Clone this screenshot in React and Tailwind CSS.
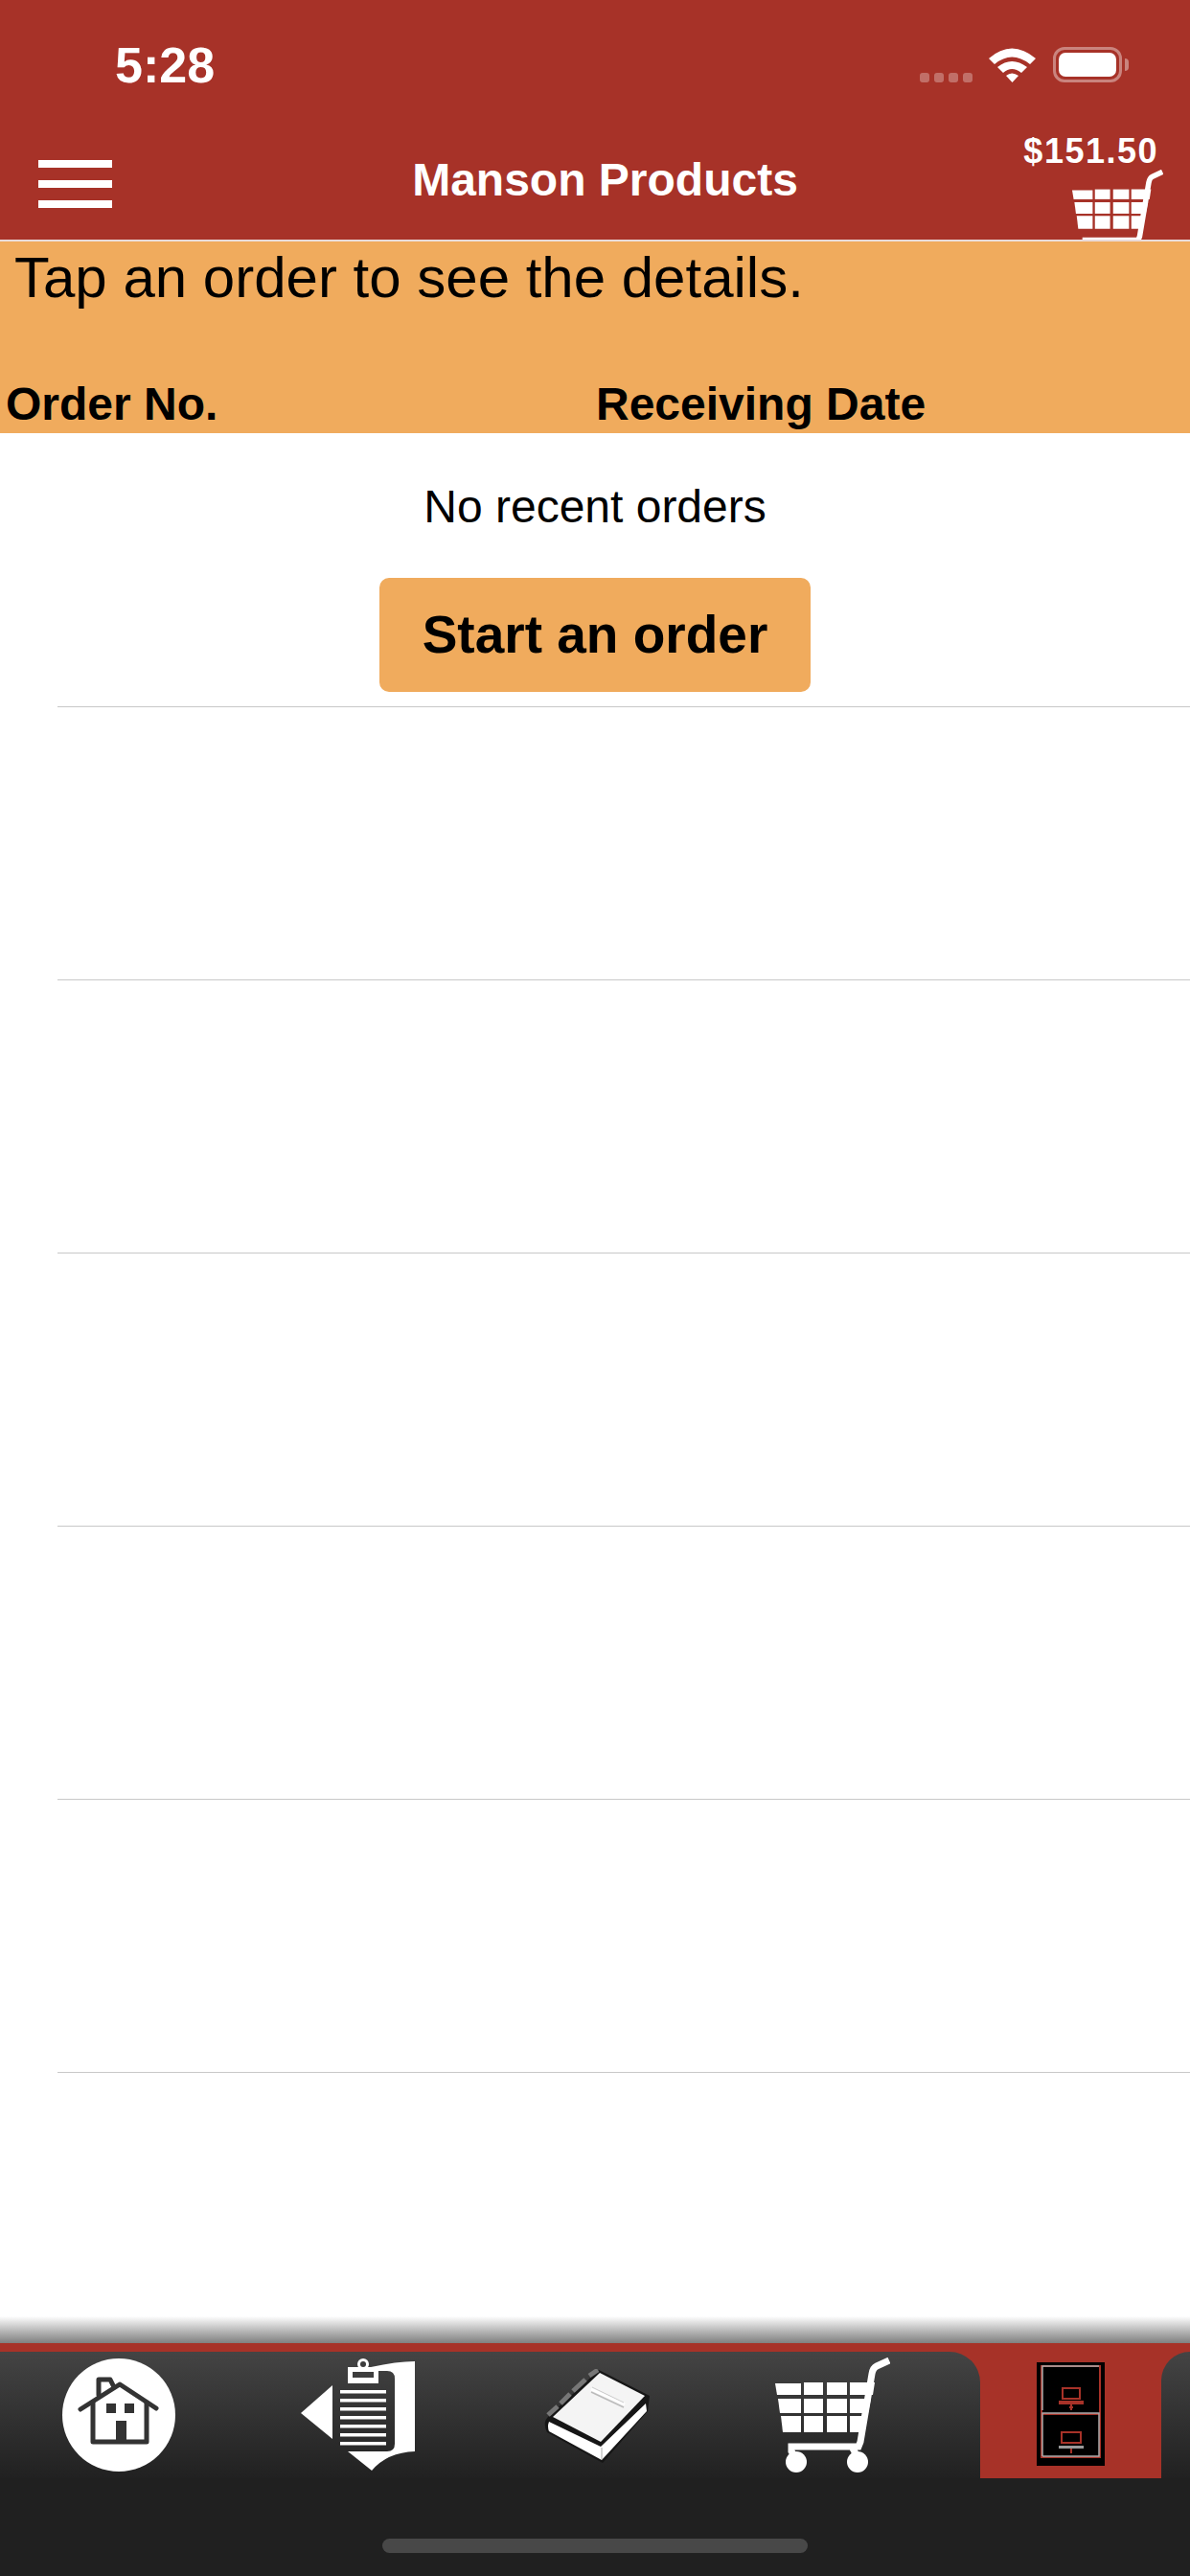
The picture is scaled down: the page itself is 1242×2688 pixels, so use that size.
const CartIcon = ({ className }) => (
    <svg viewBox="0 0 120 120" className={className}>
        <g fill="#fff">
            <path d="M0 27H27V39H2Z" />
            <path d="M30 26H50V39H30Z" />
            <path d="M54 26H75V39H54Z" />
            <path d="M78 26H104L102 39H78Z" />
            <path d="M3 43H27V58H5Z" />
            <path d="M30 43H50V58H30Z" />
            <path d="M54 43H75V58H54Z" />
            <path d="M78 43H100L97 58H78Z" />
            <path d="M6 61H27V78H8Z" />
            <path d="M30 61H50V78H30Z" />
            <path d="M54 61H75V78H54Z" />
            <path d="M78 61H96L93 78H78Z" />
            <circle cx="22" cy="109" r="11" />
            <circle cx="86" cy="109" r="11" />
        </g>
        <path
            d="M119 3L106 9Q102 11 101 17L89 88L87 93H17V98L21 104M80 93L86 104"
            fill="none"
            stroke="#fff"
            strokeWidth="7"
        />
    </svg>
);

const HomeIcon = () => (
    <svg viewBox="0 0 118 118" className="w-[118px] h-[118px] shrink-0 mt-[7px]">
        <circle cx="59" cy="59" r="59" fill="#fff" />
        <g fill="none" stroke="#333" strokeWidth="5" strokeLinecap="round" strokeLinejoin="round">
            <path d="M19 53L60 27L98 52" />
            <path d="M32 46V87H88V46" />
            <path d="M38 38V22H50L54 30" />
        </g>
        <g fill="#333">
            <rect x="46" y="47" width="10" height="10" />
            <rect x="65" y="47" width="10" height="10" />
            <rect x="56" y="65" width="11" height="20" />
        </g>
    </svg>
);

const ClipboardIcon = () => (
    <svg viewBox="0 0 120 118" className="w-[120px] h-[118px] shrink-0 mt-[7px]">
        <g fill="#fff">
            <path d="M0 57L33 28V84Z" />
            <path d="M73 9Q100 3 119 3V97Q90 98 74 117L49 97H90Q98 97 98 89V21Q98 13 90 13H81V9Z" />
            <path d="M49 9H81V26H49ZM54 14V20H76V14Z" fillRule="evenodd" />
            <circle cx="65" cy="6" r="6" />
            <rect x="41" y="33" width="48" height="3.500" />
            <rect x="41" y="42" width="48" height="3.500" />
            <rect x="41" y="51" width="48" height="3.500" />
            <rect x="41" y="60" width="48" height="3.500" />
            <rect x="41" y="69" width="48" height="3.500" />
            <rect x="41" y="78" width="48" height="3.500" />
            <rect x="41" y="87" width="48" height="3.500" />
        </g>
        <circle cx="65" cy="6" r="3" fill="#3c3c3c" />
    </svg>
);

const BookIcon = () => (
    <svg viewBox="0 0 110 98" className="w-[110px] h-[98px] shrink-0 mt-[18px]">
        <path d="M57 1L110 28L108 44L61 98L3 66Q-2 56 4 50Z" fill="#161616" />
        <path d="M5 55L59 81L106 36L107 44L60 95L5 65Q3 60 5 55Z" fill="#fff" />
        <path d="M60 82V94" stroke="#aaa" strokeWidth="1" />
        <path d="M58 4L105 28L59 76L9 50Z" fill="#f4f4f4" />
        <path d="M49 21L84 37" stroke="#fff" strokeWidth="3" />
        <path d="M49 24L83 40" stroke="#bbb" strokeWidth="1.500" />
        <path d="M50 19L83 35" stroke="#ccc" strokeWidth="1" />
        <g stroke="#777" strokeWidth="5">
            <path d="M47 7L56 1" />
            <path d="M30 23L43 11" />
            <path d="M17 36L27 26" />
            <path d="M4 48L14 39" />
        </g>
    </svg>
);

const CabinetIcon = () => (
    <svg viewBox="0 0 71 108" className="w-[71px] h-[108px] shrink-0 mt-[11px]">
        <rect width="71" height="108" fill="#000" />
        <rect x="5" y="4" width="61" height="50" fill="none" stroke="#a73228" strokeWidth="2" />
        <rect x="5" y="54" width="61" height="45" fill="none" stroke="#a73228" strokeWidth="2" />
        <path d="M6 50V4H65" fill="none" stroke="#aaa" strokeWidth="1.500" />
        <path d="M6 98V53H65V98H6" fill="none" stroke="#aaa" strokeWidth="1.500" />
        <g fill="none" stroke="#a73228" strokeWidth="2">
            <rect x="27" y="27" width="18" height="11" />
            <rect x="26" y="73" width="20" height="11" />
        </g>
        <rect x="23" y="40" width="26" height="4" fill="#a73228" />
        <rect x="23" y="87" width="26" height="3" fill="#999" />
        <path d="M36 44V50M34 47H38M36 90V95" stroke="#a73228" strokeWidth="2" />
    </svg>
);

export default function App() {
    return (
        <main className="w-[1242px] h-[2688px] flex flex-col bg-white font-['Liberation_Sans',sans-serif] text-black overflow-hidden">
            {/* Header */}
            <header className="h-[252px] shrink-0 bg-[#a73228] border-b-2 border-[#eadbd9] overflow-hidden text-white">
                <div className="h-[132px] flex items-start pl-[120px] pr-[64px]">
                    <span className="text-[52px] leading-[50px] mt-[43px] font-bold flex-1">5:28</span>
                    <div className="flex items-center mt-[49px]">
                        <div className="flex gap-[5px] mt-[26px] mr-[17px]">
                            <span className="w-[10px] h-[10px] rounded-[3px] bg-white/30" />
                            <span className="w-[10px] h-[10px] rounded-[3px] bg-white/30" />
                            <span className="w-[10px] h-[10px] rounded-[3px] bg-white/30" />
                            <span className="w-[10px] h-[10px] rounded-[3px] bg-white/30" />
                        </div>
                        <svg viewBox="0 0 49 36" className="w-[49px] h-[36px] mr-[18px]">
                            <path d="M0 11Q24 -10 49 11L43 17Q24 2 6 17Z" fill="#fff" />
                            <path d="M9 20Q24 8 40 20L34 26Q24 18 15 26Z" fill="#fff" />
                            <path d="M18 29Q24 24 31 29L24.500 36Z" fill="#fff" />
                        </svg>
                        <div className="w-[72px] h-[37px] rounded-[12px] border-[3px] border-white/40 p-[3px]">
                            <div className="w-full h-full rounded-[7px] bg-white" />
                        </div>
                        <span className="w-[4px] h-[13px] ml-[3px] rounded-r-full bg-white/40" />
                    </div>
                </div>
                <div className="flex items-start pl-[40px] pr-[28px]">
                    <div className="w-[77px] mt-[35px] flex flex-col gap-[13px]">
                        <span className="h-[8px] bg-white" />
                        <span className="h-[8px] bg-white" />
                        <span className="h-[8px] bg-white" />
                    </div>
                    <h1 className="flex-1 pl-[78px] mt-[31px] text-center text-[48px] leading-[50px] font-bold whitespace-nowrap">
                        Manson Products
                    </h1>
                    <div className="w-[146px] flex flex-col items-end">
                        <span className="text-[36px] leading-[40px] font-bold tracking-[1.5px] mr-[5px] mt-[6px]">$151.50</span>
                        <CartIcon className="w-[95px] h-[95px] shrink-0 -mt-[1px]" />
                    </div>
                </div>
            </header>

            {/* Orange heading */}
            <section className="h-[200px] shrink-0 bg-[#f0ab5d] flex flex-col justify-between">
                <p className="text-[60px] leading-[66px] pl-[15px] mt-[5px]">Tap an order to see the details.</p>
                <div className="grid grid-cols-2 text-[48px] leading-[52px] font-bold mb-[4px]">
                    <span className="pl-[6px]">Order No.</span>
                    <span className="pl-[1px]">Receiving Date</span>
                </div>
            </section>

            {/* Rows */}
            <div className="flex-1 flex flex-col">
                <div className="h-[286px] shrink-0 ml-[60px] border-b border-[#c8c8c8] flex flex-col items-center pr-[60px]">
                    <p className="text-[48px] leading-[54px] mt-[50px]">No recent orders</p>
                    <button className="w-[450px] h-[119px] mt-[47px] rounded-[10px] bg-[#f0ab5d] text-[55px] font-bold">
                        Start an order
                    </button>
                </div>
                <div className="h-[285px] shrink-0 ml-[60px] border-b border-[#c8c8c8]" />
                <div className="h-[285px] shrink-0 ml-[60px] border-b border-[#c8c8c8]" />
                <div className="h-[285px] shrink-0 ml-[60px] border-b border-[#c8c8c8]" />
                <div className="h-[285px] shrink-0 ml-[60px] border-b border-[#c8c8c8]" />
                <div className="h-[285px] shrink-0 ml-[60px] border-b border-[#c8c8c8]" />
            </div>

            {/* Tab bar */}
            <div className="h-[28px] shrink-0 bg-gradient-to-b from-white to-[#808080]" />
            <nav className="h-[243px] shrink-0 bg-[#202020] flex flex-col">
                <div className="h-[141px] shrink-0 bg-[#a73228] pt-[9px] flex items-stretch">
                    <div className="w-[1023px] flex items-start pl-[65px] rounded-tr-[32px] bg-gradient-to-b from-[#444444] to-[#212121]">
                        <HomeIcon />
                        <div className="w-[131px]" />
                        <ClipboardIcon />
                        <div className="w-[134px]" />
                        <BookIcon />
                        <div className="w-[131px]" />
                        <CartIcon className="w-[120px] h-[120px] shrink-0 mt-[6px]" />
                    </div>
                    <div className="w-[189px] flex justify-center pr-[1px]">
                        <CabinetIcon />
                    </div>
                    <div className="flex-1 rounded-tl-[32px] bg-gradient-to-b from-[#444444] to-[#212121]" />
                </div>
                <div className="flex justify-center pt-[63px]">
                    <span className="w-[444px] h-[15px] rounded-full bg-[#484848]" />
                </div>
            </nav>
        </main>
    );
}
